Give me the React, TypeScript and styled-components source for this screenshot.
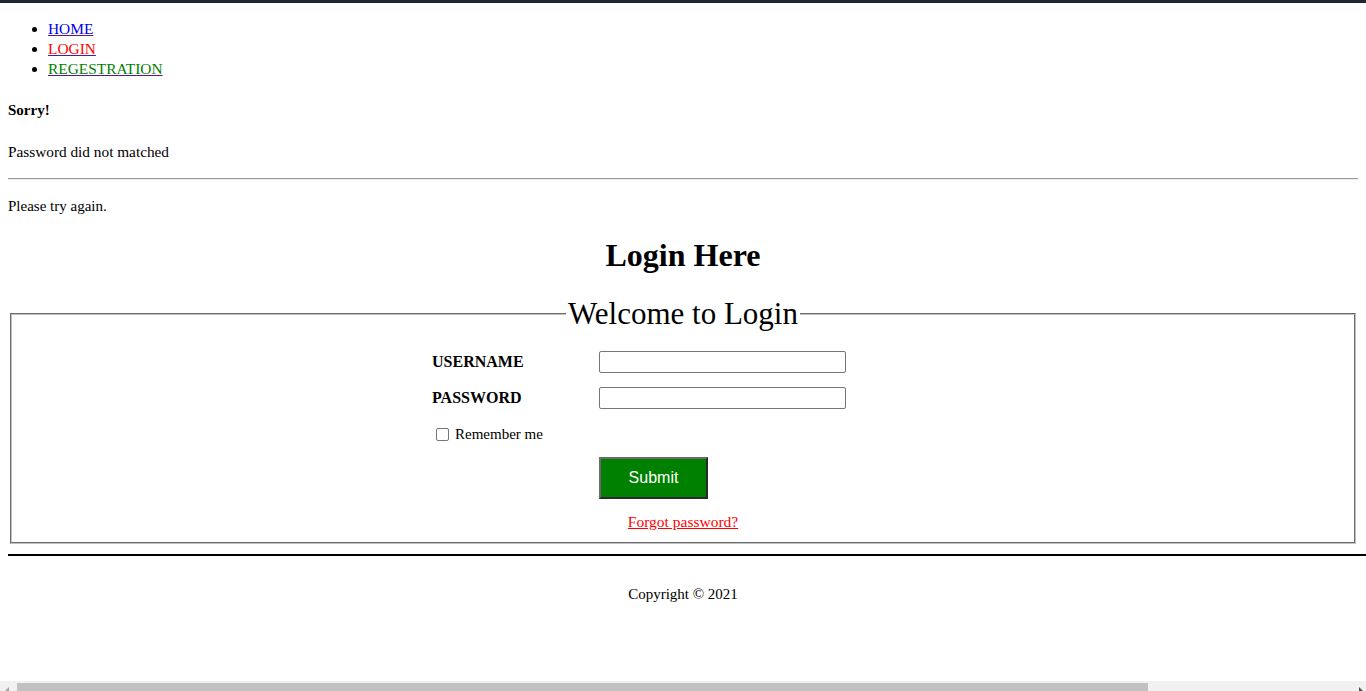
import React from "react";
import styled, { createGlobalStyle } from "styled-components";

const Global = createGlobalStyle`
  html, body { margin: 0; padding: 0; background: #fff; overflow: hidden; }
  body { font-family: "Liberation Serif", "Times New Roman", serif; font-size: 16px; color: #000; }
`;

const TopBar = styled.div`
  height: 3px;
  background: #1f2636;
`;

const Page = styled.div`
  padding: 0 8px;
`;

const NavList = styled.ul`
  margin: 16px 0 0;
  padding-left: 40px;
  list-style: disc;
  font-size: 15.4px;
`;

const NavItem = styled.li`
  line-height: 20px;
`;

const NavLink = styled.a<{ $c: string }>`
  color: ${(p) => p.$c};
  text-decoration: underline;
  text-decoration-color: #551a8b;
`;

const Sorry = styled.h4`
  margin: 22px 0 0;
  font-size: 15px;
  font-weight: bold;
  line-height: 18px;
`;

const Para = styled.p<{ $mt: number; $fs?: number }>`
  margin: ${(p) => p.$mt}px 0 0;
  line-height: 18px;
  font-size: ${(p) => p.$fs ?? 15}px;
`;

const Rule = styled.hr`
  margin: 17px 0 0;
  border: none;
  border-top: 1px solid #9a9a9a;
  border-bottom: 1px solid #eeeeee;
  height: 0;
`;

const Title = styled.h2`
  margin: 22px 0 0;
  font-size: 32px;
  font-weight: bold;
  text-align: center;
  line-height: 36px;
`;

const Fieldset = styled.fieldset`
  margin: 24px 2px 0;
  padding: 18px 12px 11px;
  border: 2px groove rgb(192, 192, 192);
`;

const Legend = styled.legend`
  margin: 0 auto;
  padding: 0 2px;
  font-size: 31px;
  line-height: 34px;
`;

const FormGrid = styled.div`
  display: grid;
  grid-template-columns: 167px 335px;
  width: 502px;
  margin: 2px auto 0;
  row-gap: 14px;
  align-items: center;
`;

const Label = styled.label`
  font-weight: bold;
  font-size: 16px;
  line-height: 22px;
`;

const TextInput = styled.input`
  width: 247px;
  height: 22px;
  box-sizing: border-box;
  border: 1px solid #767676;
  border-radius: 2px;
  padding: 1px 2px;
  font: inherit;
`;

const CheckRow = styled.div`
  grid-column: 1 / span 2;
  display: flex;
  align-items: center;
  gap: 6px;
  padding-left: 4px;
  line-height: 22px;
  font-size: 15px;
`;

const Check = styled.span`
  width: 11px;
  height: 11px;
  border: 1px solid #767676;
  border-radius: 2px;
  background: #fff;
`;

const SubmitCell = styled.div`
  grid-column: 2;
  margin-top: -2px;
`;

const SubmitButton = styled.button`
  width: 109px;
  height: 42px;
  background: #008000;
  color: #fff;
  font-family: "Liberation Sans", Arial, sans-serif;
  font-size: 16px;
  border: 2px solid;
  border-color: #6b6b6b #2a2a2a #2a2a2a #6b6b6b;
  padding: 0;
`;

const ForgotRow = styled.div`
  text-align: center;
  margin-top: 14px;
  line-height: 18px;
  font-size: 15.5px;
`;

const Forgot = styled.a`
  color: #ff0000;
  text-decoration: underline;
  text-decoration-color: #ff0000;
`;

const BottomRule = styled.hr`
  margin: 10px -40px 0 0;
  border: none;
  border-top: 2px solid #000;
  height: 0;
`;

const Footer = styled.p`
  margin: 29px 0 0;
  text-align: center;
  line-height: 18px;
  font-size: 15px;
`;

const ScrollBar = styled.div`
  position: fixed;
  left: 0;
  right: 0;
  bottom: 0;
  height: 10px;
  background: #f1f1f1;
`;

const ScrollThumb = styled.div`
  position: absolute;
  left: 17px;
  width: 1131px;
  top: 2px;
  bottom: 0;
  background: #c1c1c1;
`;

const Arrow = styled.span<{ $side: "l" | "r" }>`
  position: absolute;
  bottom: 0;
  ${(p) => (p.$side === "l" ? "left: 5px;" : "right: 3px;")}
  width: 0;
  height: 0;
  border-top: 4px solid transparent;
  ${(p) =>
    p.$side === "l"
      ? "border-right: 4px solid #a3a3a3;"
      : "border-left: 4px solid #505050;"}
`;

export default function App() {
  return (
    <>
      <Global />
      <TopBar />
      <Page>
        <NavList>
          <NavItem>
            <NavLink href="#" $c="#0000ee">HOME</NavLink>
          </NavItem>
          <NavItem>
            <NavLink href="#" $c="#ff0000">LOGIN</NavLink>
          </NavItem>
          <NavItem>
            <NavLink href="#" $c="#008000">REGESTRATION</NavLink>
          </NavItem>
        </NavList>
        <Sorry>Sorry!</Sorry>
        <Para $mt={24} $fs={15.3}>Password did not matched</Para>
        <Rule />
        <Para $mt={17}>Please try again.</Para>
        <Title>Login Here</Title>
        <Fieldset>
          <Legend>Welcome to Login</Legend>
          <FormGrid>
            <Label>USERNAME</Label>
            <TextInput type="text" />
            <Label>PASSWORD</Label>
            <TextInput type="password" />
            <CheckRow>
              <Check />
              <span>Remember me</span>
            </CheckRow>
            <SubmitCell>
              <SubmitButton>Submit</SubmitButton>
            </SubmitCell>
          </FormGrid>
          <ForgotRow>
            <Forgot href="#">Forgot password?</Forgot>
          </ForgotRow>
        </Fieldset>
        <BottomRule />
        <Footer>Copyright © 2021</Footer>
      </Page>
      <ScrollBar>
        <Arrow $side="l" />
        <ScrollThumb />
        <Arrow $side="r" />
      </ScrollBar>
    </>
  );
}
